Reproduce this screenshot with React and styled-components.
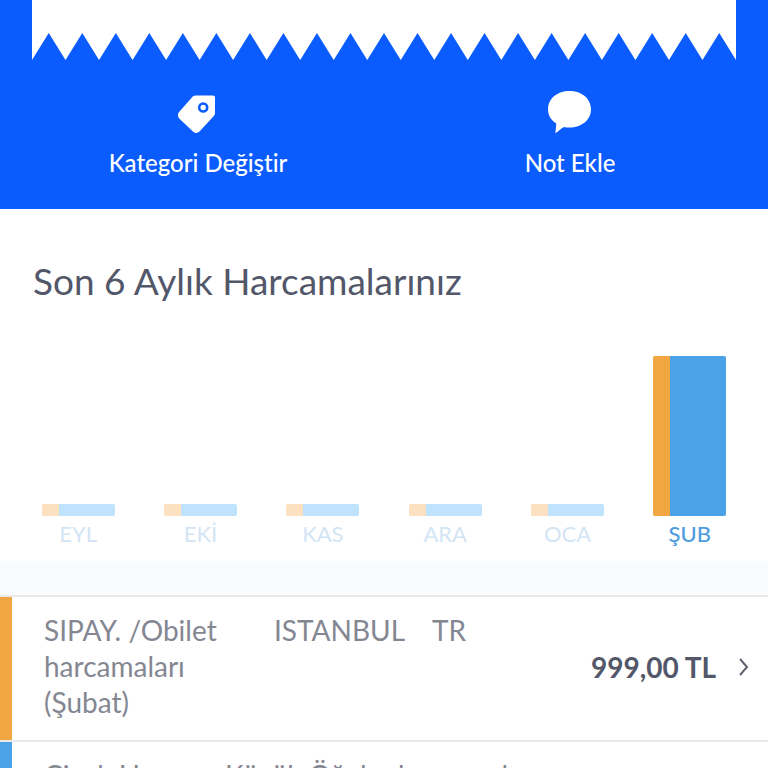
import React from 'react';
import styled, { createGlobalStyle } from 'styled-components';

const months = [
    { label: 'EYL', height: 12 },
    { label: 'EKİ', height: 12 },
    { label: 'KAS', height: 12 },
    { label: 'ARA', height: 12 },
    { label: 'OCA', height: 12 },
    { label: 'ŞUB', height: 160, active: true },
];

const spendings = [
    {
        color: '#f0a742',
        text: 'SIPAY. /Obilet        ISTANBUL    TR\nharcamaları\n(Şubat)',
        amount: '999,00 TL',
    },
    {
        color: '#4ca2e7',
        text: 'Çiçek Hayvan, Küçük Öğeler harcamaları\n(Şubat)',
        amount: '999,00 TL',
    },
];

const TEETH = 21;

const GlobalStyle = createGlobalStyle`
    * {
        box-sizing: border-box;
    }
    html {
        scrollbar-width: none;
    }
    body {
        margin: 0;
        background: #ffffff;
        font-family: Lato, 'Open Sans', sans-serif;
        font-variant-ligatures: none;
    }
`;

const Header = styled.header`
    height: 209px;
    padding: 0 32px;
    background: #0a5cff;
`;
const Receipt = styled.div`
    height: 33px;
    background: #ffffff;
`;
const Tear = styled.svg`
    display: block;
    width: 100%;
    height: 27px;
    fill: #ffffff;
`;
const Actions = styled.div`
    display: grid;
    grid-template-columns: 1fr 1fr;
    gap: 40px;
    padding-top: 26px;
`;
const Action = styled.button`
    display: flex;
    flex-direction: column;
    align-items: center;
    gap: 9px;
    padding: 0;
    border: none;
    background: none;
    color: #ffffff;
    font-family: inherit;
    font-variant-ligatures: inherit;
    font-size: 24px;
    font-weight: 500;
    line-height: 32px;
    cursor: pointer;
    svg {
        display: block;
        width: 52px;
        height: 52px;
    }
`;

const Summary = styled.section`
    padding: 49px 17px 13px;
`;
const Title = styled.h2`
    margin: 0;
    padding-left: 16px;
    color: #525769;
    font-size: 37px;
    font-weight: 400;
    line-height: 46px;
`;
const Chart = styled.div`
    display: grid;
    grid-template-columns: repeat(6, 1fr);
    margin-top: 52px;
`;
const Month = styled.div`
    display: flex;
    flex-direction: column;
    justify-content: flex-end;
    align-items: center;
    gap: 4px;
    color: ${props => (props.$active ? '#4f9cdd' : '#d3e5f4')};
    font-size: 22px;
    font-weight: ${props => (props.$active ? 500 : 400)};
    line-height: 28px;
`;
const Bar = styled.div`
    width: 73px;
    border-radius: 2px;
    background: ${props => (props.$active
        ? 'linear-gradient(to right, #f0a742 17px, #4ca2e7 17px)'
        : 'linear-gradient(to right, #fde0c0 17px, #bfe2fd 17px)')};
`;

const List = styled.ul`
    margin: 0;
    padding: 34px 0 0;
    list-style: none;
    background: #fafbfd;
`;
const Item = styled.li`
    border-top: 2px solid #e9e9eb;
    background: #ffffff;
`;
const ItemLink = styled.a`
    display: flex;
    align-items: center;
    min-height: 143px;
    padding: 15px 18px 19px 32px;
    border-left: 12px solid ${props => props.$color};
    color: #848792;
    text-decoration: none;
`;
const Description = styled.span`
    flex: 1;
    align-self: flex-start;
    font-size: 28px;
    line-height: 36px;
    white-space: pre-wrap;
`;
const Amount = styled.span`
    color: #525769;
    font-size: 28px;
    font-weight: 700;
    line-height: 36px;
    white-space: nowrap;
`;
const Chevron = styled.svg`
    width: 12px;
    height: 20px;
    margin-left: 22px;
    fill: none;
    stroke: #5e6270;
    stroke-width: 2;
`;

function TagIcon() {
    return (
        <svg viewBox="0 0 52 52" aria-hidden="true">
            <path
                fill="#ffffff"
                fillRule="evenodd"
                d="M21 10.2Q22.200 9.500 23.500 9.500H41Q43 9.500 43 11.500V27Q43 28.700 42 29.800L27.500 45.500Q24.500 48.200 21.200 45.700L7.200 32.500Q4.500 29 7.300 25.800ZM31.200 16.200a5.300 5.300 0 1 0 0 10.600a5.300 5.300 0 1 0 0-10.600Z"
            />
            <circle cx="31.200" cy="21.500" r="2.700" fill="#ffffff" />
        </svg>
    );
}

function NoteIcon() {
    return (
        <svg viewBox="0 0 52 52" aria-hidden="true">
            <path
                fill="#ffffff"
                d="M25.500 5C37.500 5 47 12.500 47 23.300S37.500 41.600 25.500 41.600Q22.500 41.600 20 41C17 42.500 14.500 45.500 11.300 47.300Q12 42.500 12.300 37.500C7.200 34.500 4 29.500 4 23.300C4 12.500 13.500 5 25.500 5Z"
            />
        </svg>
    );
}

function TornEdge() {
    let d = 'M0 0';
    for (let i = 0; i < TEETH; i++) {
        d += `L${i * 2} 27L${i * 2 + 1} 0`;
    }
    // the last tooth ends on the right edge of the receipt
    d += `L${TEETH * 2} 27V0Z`;
    return (
        <Tear viewBox={`0 0 ${TEETH * 2} 27`} preserveAspectRatio="none" aria-hidden="true">
            <path d={d} />
        </Tear>
    );
}

function App() {
    return (
        <main>
            <GlobalStyle />
            <Header>
                <Receipt />
                <TornEdge />
                <Actions>
                    <Action type="button">
                        <TagIcon />
                        Kategori Değiştir
                    </Action>
                    <Action type="button">
                        <NoteIcon />
                        Not Ekle
                    </Action>
                </Actions>
            </Header>
            <Summary>
                <Title>Son 6 Aylık Harcamalarınız</Title>
                <Chart>
                    {months.map(month => (
                        <Month key={month.label} $active={month.active}>
                            <Bar $active={month.active} style={{ height: month.height }} />
                            {month.label}
                        </Month>
                    ))}
                </Chart>
            </Summary>
            <List>
                {spendings.map((item, k) => (
                    <Item key={k}>
                        <ItemLink href="#" $color={item.color}>
                            <Description>{item.text}</Description>
                            <Amount>{item.amount}</Amount>
                            <Chevron viewBox="0 0 12 20" aria-hidden="true">
                                <path d="M2 2L9 10L2 18" />
                            </Chevron>
                        </ItemLink>
                    </Item>
                ))}
            </List>
        </main>
    );
}

export default App;
